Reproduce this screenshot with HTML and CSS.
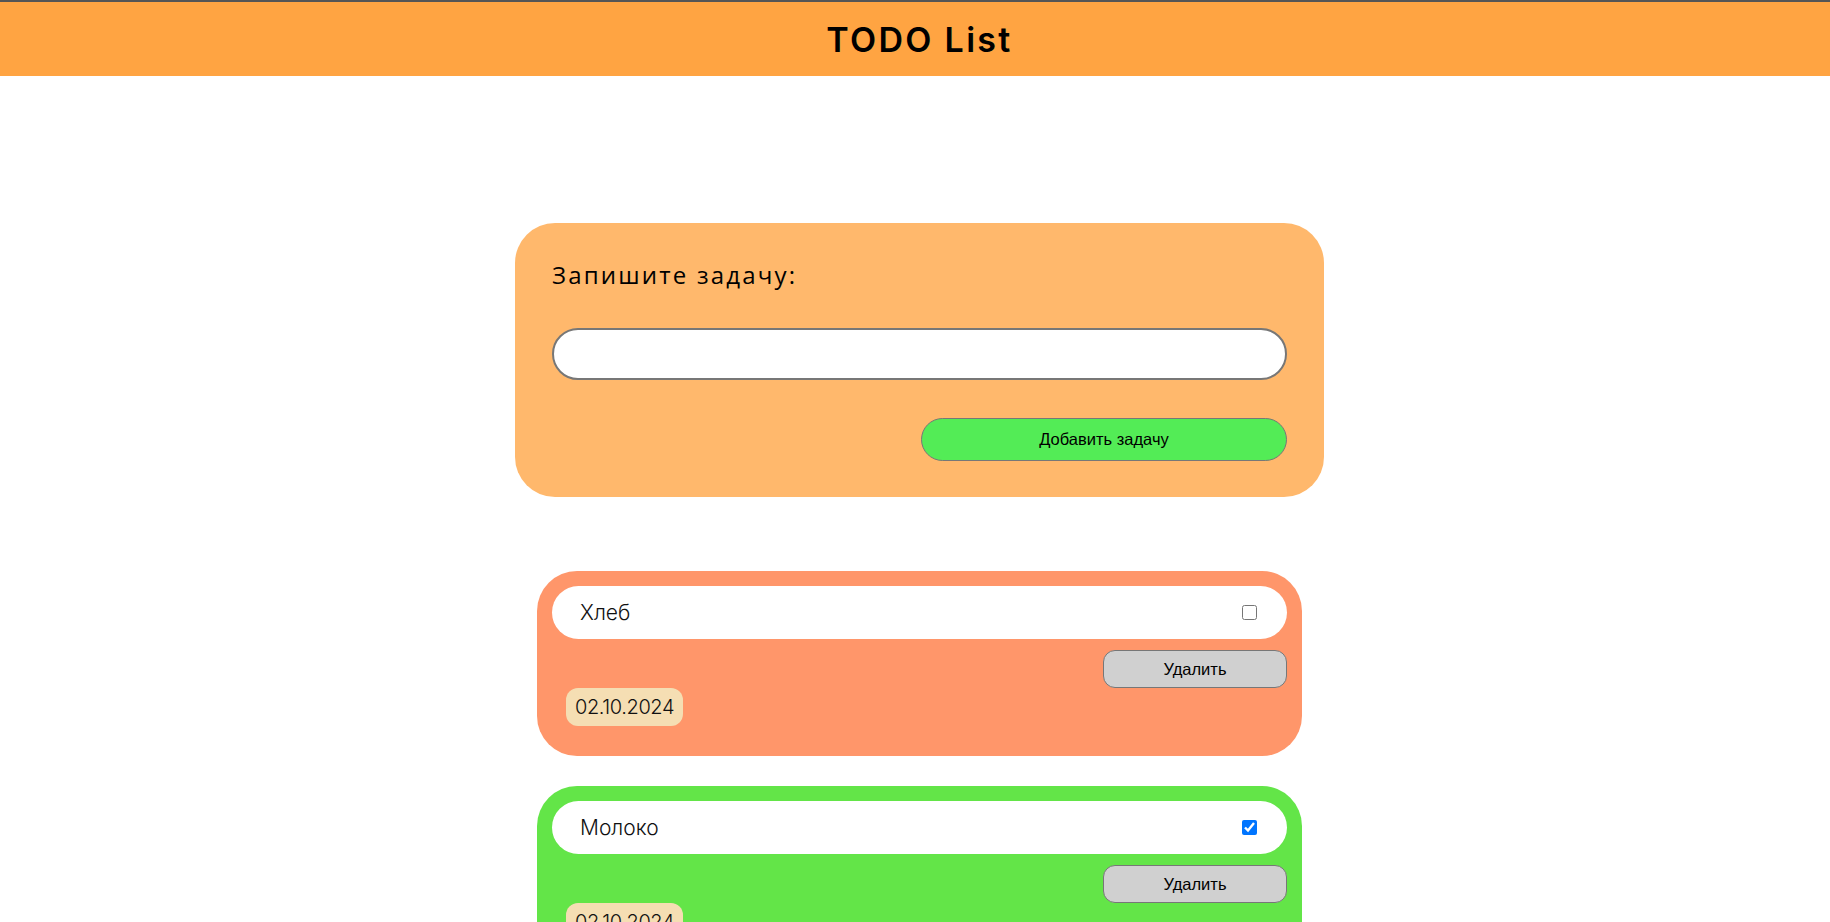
FILE: index.html
```html
<!DOCTYPE html>
<html lang="ru">
<head>
<meta charset="utf-8">
<title>TODO List</title>
<link rel="stylesheet" href="styles.css">
</head>
<body>
<header class="header">
  <h1 class="title">TODO List</h1>
</header>
<main class="main">
  <section class="form-card">
    <label class="label" for="task">Запишите задачу:</label>
    <input class="input" id="task" type="text">
    <div class="form-actions">
      <button class="add-btn" type="button">Добавить задачу</button>
    </div>
  </section>
  <section class="list">
    <div class="item item-open">
      <div class="row">
        <span class="row-text">Хлеб</span>
        <input class="check" type="checkbox">
      </div>
      <div class="item-actions">
        <button class="del-btn" type="button">Удалить</button>
      </div>
      <span class="date">02.10.2024</span>
    </div>
    <div class="item item-done">
      <div class="row">
        <span class="row-text">Молоко</span>
        <input class="check" type="checkbox" checked>
      </div>
      <div class="item-actions">
        <button class="del-btn" type="button">Удалить</button>
      </div>
      <span class="date">02.10.2024</span>
    </div>
  </section>
</main>
</body>
</html>
```
FILE: styles.css
```css
* { box-sizing: border-box; }
body {
  margin: 0;
  background: #fff;
  font-family: Inter, "Noto Sans", sans-serif;
  color: #000;
}
.header {
  height: 76px;
  background: #ffa442;
  border-top: 2px solid #555;
  display: flex;
  align-items: center;
  justify-content: center;
  padding-left: 9px;
}
.title {
  margin: 0;
  font-family: Inter, sans-serif;
  font-weight: 600;
  font-size: 34px;
  letter-spacing: 2.3px;
}
.main {
  padding: 147px 0 40px 9px;
  display: flex;
  flex-direction: column;
  align-items: center;
}
.form-card {
  width: 809px;
  padding: 37px 37px 36px;
  background: #ffb86c;
  border-radius: 40px;
  display: flex;
  flex-direction: column;
}
.label {
  font-family: "Open Sans", sans-serif;
  font-weight: 400;
  font-size: 24px;
  line-height: 30px;
  margin-top: 0;
  margin-bottom: 2px;
  letter-spacing: 2.2px;
}
.input {
  margin-top: 36px;
  width: 100%;
  height: 52px;
  border: 2px solid #777;
  border-radius: 26px;
  background: #fff;
  padding: 0 20px;
  font-size: 18px;
}
.form-actions {
  margin-top: 38px;
  display: flex;
  justify-content: flex-end;
}
.add-btn {
  width: 366px;
  height: 43px;
  border: 1px solid #777;
  border-radius: 22px;
  background: #53ec56;
  font-family: "Liberation Sans", Arial, sans-serif;
  font-size: 16.5px;
  color: #000;
}
.list {
  margin-top: 74px;
  display: flex;
  flex-direction: column;
  gap: 30px;
}
.item {
  width: 765px;
  padding: 15px 15px 30px;
  border-radius: 40px;
  display: flex;
  flex-direction: column;
}
.item-open { background: #ff966a; }
.item-done { background: #63e548; }
.row {
  height: 53px;
  background: #fff;
  border-radius: 27px;
  display: flex;
  align-items: center;
  justify-content: space-between;
  padding: 0 30px 0 28px;
}
.row-text {
  font-weight: 300;
  font-size: 21px;
  color: #111;
}
.check {
  margin: 0;
  width: 15px;
  height: 15px;
}
.item-actions {
  margin-top: 11px;
  display: flex;
  justify-content: flex-end;
}
.del-btn {
  width: 184px;
  height: 38px;
  border: 1px solid #777;
  border-radius: 12px;
  background: #d0d0d0;
  font-family: "Liberation Sans", Arial, sans-serif;
  font-size: 16.5px;
  color: #000;
}
.date {
  align-self: flex-start;
  margin-left: 14px;
  height: 38px;
  line-height: 38px;
  padding: 0 9px;
  border-radius: 12px;
  background: #f5deb3;
  font-weight: 300;
  font-size: 20px;
  letter-spacing: -0.4px;
  color: #111;
}
```
